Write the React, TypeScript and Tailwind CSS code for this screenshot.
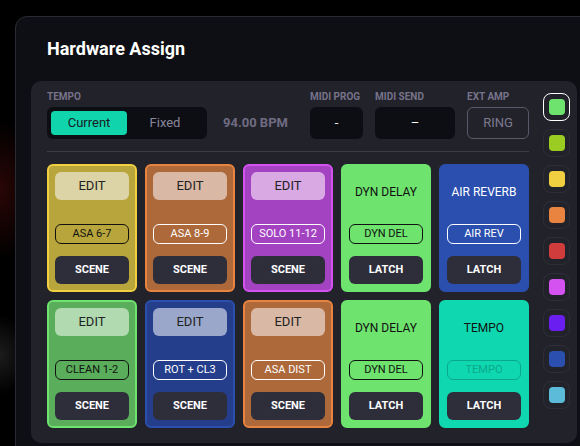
import React from 'react';

type Pad = {
  bg: string;
  border: string;
  edit?: string;
  title?: string;
  titleColor?: string;
  pill: string;
  pillStyle: string;
  action: 'SCENE' | 'LATCH';
};

const pads: Pad[] = [
  { bg: 'bg-[#b8a53c]', border: 'border-[#f0d040]', edit: 'bg-[#dcd3a6]', pill: 'ASA 6-7', pillStyle: 'border-[#111] text-[#111]', action: 'SCENE' },
  { bg: 'bg-[#ad693a]', border: 'border-[#e8843f]', edit: 'bg-[#dab8a6]', pill: 'ASA 8-9', pillStyle: 'border-white text-white', action: 'SCENE' },
  { bg: 'bg-[#a443c2]', border: 'border-[#d352f0]', edit: 'bg-[#d9a9e3]', pill: 'SOLO 11-12', pillStyle: 'border-white text-white', action: 'SCENE' },
  { bg: 'bg-[#6ee36e]', border: 'border-[#6ee36e]', title: 'DYN DELAY', titleColor: 'text-[#111]', pill: 'DYN DEL', pillStyle: 'border-[#111] text-[#111]', action: 'LATCH' },
  { bg: 'bg-[#2a4fae]', border: 'border-[#2a4fae]', title: 'AIR REVERB', titleColor: 'text-white', pill: 'AIR REV', pillStyle: 'border-white text-white', action: 'LATCH' },
  { bg: 'bg-[#5aad5a]', border: 'border-[#6ee36e]', edit: 'bg-[#b1dab1]', pill: 'CLEAN 1-2', pillStyle: 'border-[#111] text-[#111]', action: 'SCENE' },
  { bg: 'bg-[#243e8c]', border: 'border-[#2a4fae]', edit: 'bg-[#9ba6cb]', pill: 'ROT + CL3', pillStyle: 'border-white text-white', action: 'SCENE' },
  { bg: 'bg-[#ad693a]', border: 'border-[#e8843f]', edit: 'bg-[#dab8a6]', pill: 'ASA DIST', pillStyle: 'border-white text-white', action: 'SCENE' },
  { bg: 'bg-[#6ee36e]', border: 'border-[#6ee36e]', title: 'DYN DELAY', titleColor: 'text-[#111]', pill: 'DYN DEL', pillStyle: 'border-[#111] text-[#111]', action: 'LATCH' },
  { bg: 'bg-[#0fd8b0]', border: 'border-[#0fd8b0]', title: 'TEMPO', titleColor: 'text-[#111]', pill: 'TEMPO', pillStyle: 'border-[#0aa88a] text-[#0aa88a]', action: 'LATCH' },
];

const swatches = [
  'bg-[#6ee36e]',
  'bg-[#9bcc22]',
  'bg-[#f0d040]',
  'bg-[#e8843f]',
  'bg-[#d03c3c]',
  'bg-[#d352f0]',
  'bg-[#6a1ff0]',
  'bg-[#2a4fae]',
  'bg-[#5bbbd8]',
];

function Label({ children }: { children: React.ReactNode }) {
  return <div className="text-[10px] leading-[14px] font-bold text-[#777389] uppercase mb-[3px]">{children}</div>;
}

function PadCard({ pad }: { pad: Pad }) {
  return (
    <div className={`h-[128px] rounded-md border-2 ${pad.bg} ${pad.border} p-[6px] flex flex-col`}>
      {pad.edit ? (
        <div className={`h-7 rounded-md ${pad.edit} flex items-center justify-center text-[13px] text-[#222]`}>EDIT</div>
      ) : (
        <div className={`h-7 pt-3 flex items-center justify-center text-[12px] ${pad.titleColor}`}>{pad.title}</div>
      )}
      <div className={`mt-6 h-5 rounded-md border ${pad.pillStyle} flex items-center justify-center text-[11px]`}>
        {pad.pill}
      </div>
      <div className="mt-3 h-7 rounded-md bg-[#2e2e3b] flex items-center justify-center text-[11px] font-bold text-white">
        {pad.action}
      </div>
    </div>
  );
}

export default function App() {
  return (
    <div
      className="w-[580px] h-[446px] overflow-hidden bg-black bg-[radial-gradient(ellipse_40px_70px_at_0px_190px,#2a0606,transparent),radial-gradient(ellipse_30px_40px_at_0px_355px,#1c1c1c,transparent)] pt-4 pl-[15px]"
      style={{ fontFamily: 'Roboto, "Liberation Sans", sans-serif' }}
    >
      <div className="w-[600px] h-[480px] rounded-tl-xl border border-[#2a2a33] bg-[#0e0f14]">
        <h1 className="pl-[31px] pt-[20px] text-[18px] leading-6 font-bold text-white">Hardware Assign</h1>
        <div className="mt-[20px] ml-[15px] w-[546px] h-[362px] rounded-[10px] bg-[#22222b] pl-4 pt-[9px] flex">
          <div className="w-[482px]">
            <div className="flex items-start">
              <div className="w-[160px]">
                <Label>Tempo</Label>
                <div className="h-8 rounded-md bg-[#0d0e13] p-1 flex">
                  <div className="w-[76px] rounded bg-[#0fd4ac] flex items-center justify-center text-[13px] text-[#1a1a22]">Current</div>
                  <div className="flex-1 flex items-center justify-center text-[13px] text-[#8a879c]">Fixed</div>
                </div>
              </div>
              <div className="w-[103px] pl-4 pt-[17px] h-[49px] flex items-center text-[13px] font-bold text-[#6f6c82]">94.00 BPM</div>
              <div className="w-[53px]">
                <Label>Midi Prog</Label>
                <div className="h-8 rounded-md bg-[#0d0e13] flex items-center justify-center text-[13px] text-white">-</div>
              </div>
              <div className="w-[80px] ml-3">
                <Label>Midi Send</Label>
                <div className="h-8 rounded-md bg-[#0d0e13] flex items-center justify-center text-[13px] text-white">–</div>
              </div>
              <div className="w-[62px] ml-3">
                <Label>Ext Amp</Label>
                <div className="h-8 rounded-md border border-[#5a5868] flex items-center justify-center text-[13px] text-[#7d7a8e]">RING</div>
              </div>
            </div>
            <div className="mt-3 h-px bg-[#3c3b47]" />
            <div className="mt-3 grid grid-cols-5 gap-2">
              {pads.map((p, i) => (
                <PadCard key={i} pad={p} />
              ))}
            </div>
          </div>
          <div className="ml-[14px] mt-[3px] flex flex-col gap-2">
            {swatches.map((s, i) => (
              <div
                key={s}
                className={`w-[27px] h-[28px] rounded-lg flex items-center justify-center ${i === 0 ? 'border-[1.5px] border-white' : 'border border-[#2e2e38]'}`}
              >
                <div className={`w-4 h-4 rounded-[4px] ${s}`} />
              </div>
            ))}
          </div>
        </div>
      </div>
    </div>
  );
}
